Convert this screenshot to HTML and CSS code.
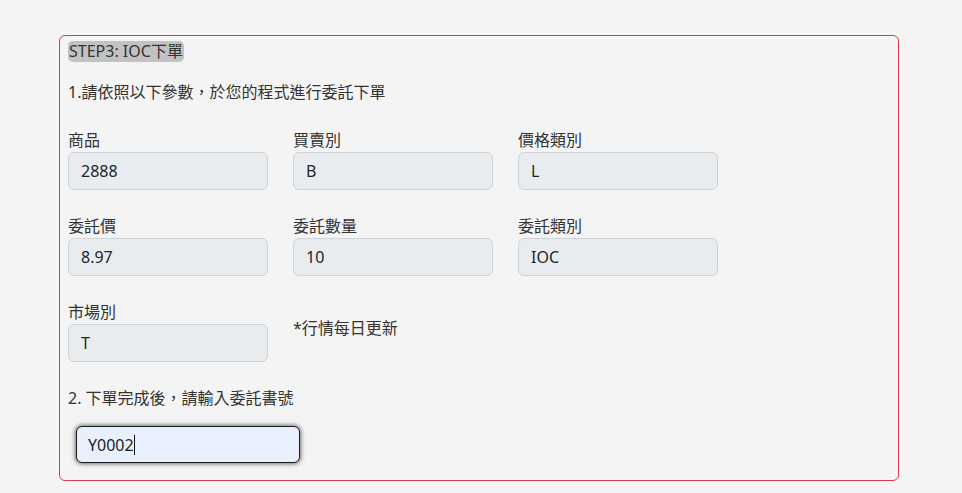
FILE: index.html
```html
<!DOCTYPE html>
<html lang="zh-Hant">
<head>
<meta charset="utf-8">
<link rel="stylesheet" href="styles.css">
</head>
<body>
<div class="page">
  <section class="step-card">
    <div class="step-title"><span class="badge">STEP3: IOC下單</span></div>
    <p class="instr">1.請依照以下參數，於您的程式進行委託下單</p>
    <div class="grid">
      <div class="field">
        <div class="label">商品</div>
        <div class="input">2888</div>
      </div>
      <div class="field">
        <div class="label">買賣別</div>
        <div class="input">B</div>
      </div>
      <div class="field">
        <div class="label">價格類別</div>
        <div class="input">L</div>
      </div>
      <div class="field">
        <div class="label">委託價</div>
        <div class="input">8.97</div>
      </div>
      <div class="field">
        <div class="label">委託數量</div>
        <div class="input">10</div>
      </div>
      <div class="field">
        <div class="label">委託類別</div>
        <div class="input">IOC</div>
      </div>
      <div class="field">
        <div class="label">市場別</div>
        <div class="input">T</div>
      </div>
      <div class="field note">*行情每日更新</div>
    </div>
    <p class="instr instr2">2. 下單完成後，請輸入委託書號</p>
    <div class="order-input"><span class="typed">Y0002</span><span class="caret"></span></div>
  </section>
</div>
</body>
</html>
```

FILE: styles.css
```css
* { box-sizing: border-box; }
html, body {
  margin: 0;
  padding: 0;
  background: #f4f4f4;
}
body {
  font-family: "Noto Sans", "Noto Sans CJK TC", sans-serif;
  font-size: 16px;
  color: #333;
  width: 962px;
  height: 493px;
  overflow: hidden;
}
.page {
  padding: 35px 0 0 59px;
}
.step-card {
  width: 840px;
  height: 446px;
  border: 1px solid #e0384f;
  border-radius: 6px;
  padding: 5px 8px 0 8px;
}
.step-title {
  height: 21px;
  display: flex;
}
.badge {
  background: #c2c2c2;
  border-radius: 5px;
  line-height: 21px;
  padding: 0 1px;
  color: #333;
}
.instr {
  margin: 19px 0 0 0;
  line-height: 22px;
}
.grid {
  margin-top: 26px;
  display: grid;
  grid-template-columns: repeat(3, 200px);
  column-gap: 25px;
  row-gap: 25px;
}
.label {
  line-height: 23px;
  height: 23px;
}
.input {
  height: 38px;
  background: #e9ecef;
  border: 1px solid #ced4da;
  border-radius: 6px;
  padding: 0 12px;
  display: flex;
  align-items: center;
  color: #212529;
}
.note {
  padding-top: 16px;
  line-height: 22px;
}
.instr2 {
  margin-top: 25px;
}
.order-input {
  margin: 17px 0 0 8px;
  width: 224px;
  height: 37px;
  background: #e8f0fe;
  border: 1px solid #1a1a1a;
  border-radius: 6px;
  box-shadow: 0 0 4px 1px rgba(0, 0, 0, 0.55);
  padding: 0 11px;
  display: flex;
  align-items: center;
  color: #212529;
}
.caret {
  display: inline-block;
  width: 1px;
  height: 20px;
  background: #111;
  margin-left: 0;
}
```
